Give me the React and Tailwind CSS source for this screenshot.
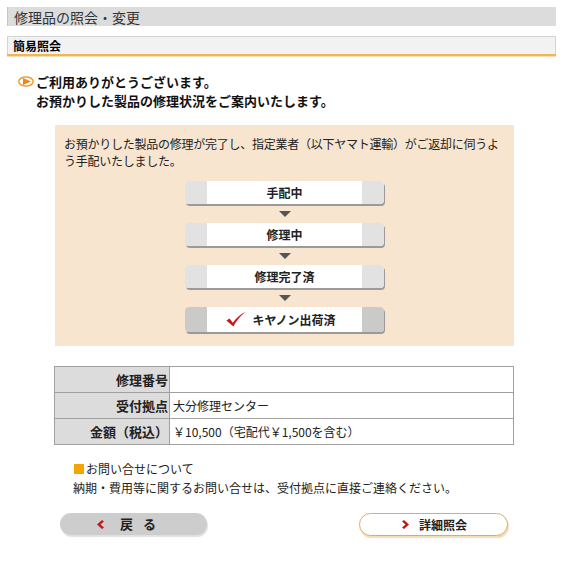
import React from "react";

const F = { fontFamily: '"Noto Sans CJK JP", "Noto Sans", sans-serif' };

function Arrow() {
  return (
    <div className="flex justify-center h-[19px] items-center">
      <svg width="12" height="6" viewBox="0 0 12 6"><path d="M0 0 H12 L6 6 Z" fill="#555" /></svg>
    </div>
  );
}

function Step({ children, done }) {
  const side = done ? "bg-[#cacaca]" : "bg-[#e2e2e2]";
  return (
    <div className={`flex w-[199px] ${done ? "h-[25px]" : "h-[23px]"} rounded-[4px] overflow-hidden shadow-[1px_2px_0_#9a9a9a] bg-white`}>
      <div className={`w-[22px] ${side}`} />
      <div className="flex-1 flex items-center justify-center text-[12px] font-bold text-[#222]">{children}</div>
      <div className={`w-[22px] ${side}`} />
    </div>
  );
}

export default function App() {
  return (
    <div className="w-[582px] h-[563px] bg-white text-[#222]" style={F}>
      <div className="pt-[7px] px-[7px] w-[563px]">
        <div className="h-[19px] bg-[#dcdcdc] border-l border-[#c4c4c4] flex items-center pl-[6px] text-[14px] text-[#333] leading-none">
          修理品の照会・変更
        </div>
        <div className="mt-[10px] h-[18px] bg-[#f2f2f2] border border-[#d4d4d4] border-b-0 flex items-center pl-[5px] text-[12px] font-bold text-black leading-none">
          簡易照会
        </div>
        <div className="h-[2px] bg-[#eeb65a]" />
        <div className="h-[1px] bg-[#f7dcae]" />
      </div>

      <div className="mt-[15px] pl-[18px] text-[13px] font-bold leading-[19px] text-[#111]">
        <div className="flex items-center">
          <svg width="17" height="11" viewBox="0 0 17 11" className="mr-[1px]">
            <ellipse cx="8" cy="5.5" rx="7.2" ry="4.6" fill="#fff" stroke="#f0a030" strokeWidth="1.5" />
            <path d="M5 2 L13 5.5 L5 9 Z" fill="#ec8a10" />
          </svg>
          <span>ご利用ありがとうございます。</span>
        </div>
        <div className="pl-[18px]">お預かりした製品の修理状況をご案内いたします。</div>
      </div>

      <div className="ml-[55px] mt-[15px] w-[459px] h-[221px] bg-[#f8e5cf] pt-[10px]">
        <div className="text-[12px] leading-[17px] text-[#222] pl-[9px] pr-[8px] tracking-[-0.25px]">
          お預かりした製品の修理が完了し、指定業者（以下ヤマト運輸）がご返却に伺うよう手配いたしました。
        </div>
        <div className="flex flex-col items-center mt-[12px]">
          <Step>手配中</Step>
          <Arrow />
          <Step>修理中</Step>
          <Arrow />
          <Step>修理完了済</Step>
          <Arrow />
          <Step done>
            <span className="flex items-center gap-[5px] -ml-[8px]">
              <svg width="22" height="15" viewBox="0 0 20 14"><path d="M1 8 L4 6 L7 10 Q12 3 19 0 Q12 5 7.5 13.5 Z" fill="#d0151f" /></svg>
              キヤノン出荷済
            </span>
          </Step>
        </div>
      </div>

      <table className="ml-[54px] mt-[20px] w-[460px] border-collapse text-[12px]">
        <tbody>
          {[
            ["修理番号", ""],
            ["受付拠点", "大分修理センター"],
            ["金額（税込）", "￥10,500（宅配代￥1,500を含む）"],
          ].map(([k, v]) => (
            <tr key={k} className="h-[26px]">
              <td className="w-[115px] bg-[#dcdcdc] border border-[#a0a0a0] text-right font-bold text-[13px] pr-[1px] text-[#222]">{k}</td>
              <td className="border border-[#a0a0a0] pl-[3px] text-[#222]">{v}</td>
            </tr>
          ))}
        </tbody>
      </table>

      <div className="ml-[74px] mt-[14px] text-[12px] leading-[19px] text-[#222]">
        <div className="flex items-center"><span className="inline-block w-[10px] h-[10px] bg-[#f5a500] mr-[2px]" />お問い合せについて</div>
        <div className="-ml-[1px]">納期・費用等に関するお問い合せは、受付拠点に直接ご連絡ください。</div>
      </div>

      <div className="flex mt-[16px] ml-[60px] w-[448px] justify-between">
        <div className="w-[147px] h-[22px] rounded-full bg-[#cdcdcd] shadow-[1px_2px_1px_#e0e0e0] flex items-center text-[13px] font-bold text-[#222]">
          <svg width="7" height="9" viewBox="0 0 7 9" className="ml-[37px]"><path d="M5 0 L7 1.5 L3.5 4.5 L7 7.5 L5 9 L0 4.5 Z" fill="#c4161c" /></svg>
          <span className="ml-[16px] tracking-[10px]">戻る</span>
        </div>
        <div className="w-[149px] h-[23px] rounded-full bg-white border border-[#efaa48] shadow-[1px_2px_1px_#f3ddb8] flex items-center text-[12px] font-bold text-[#222]">
          <svg width="7" height="9" viewBox="0 0 7 9" className="ml-[42px]"><path d="M2 0 L0 1.5 L3.5 4.5 L0 7.5 L2 9 L7 4.5 Z" fill="#c4161c" /></svg>
          <span className="ml-[10px]">詳細照会</span>
        </div>
      </div>
    </div>
  );
}
